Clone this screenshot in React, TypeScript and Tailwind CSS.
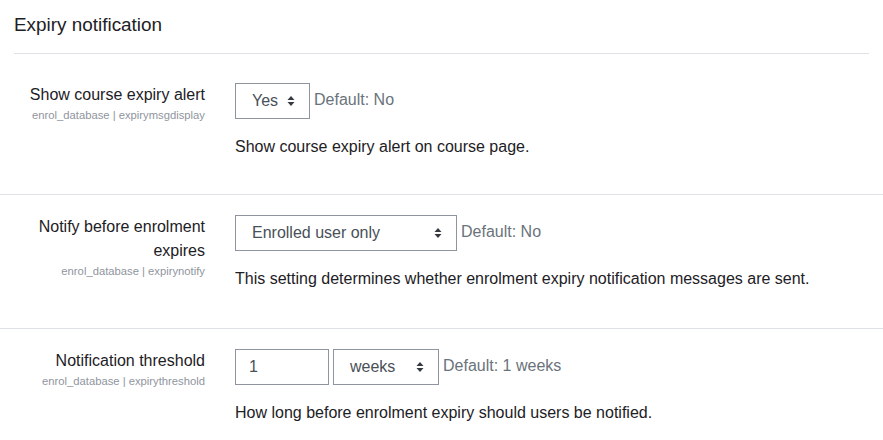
import React from "react";

function Arrows() {
  return (
    <svg width="8" height="12" viewBox="0 0 8 12" className="shrink-0">
      <path d="M4 1 L7.5 5 H0.5 Z" fill="#343a40" />
      <path d="M4 11 L7.5 7 H0.5 Z" fill="#343a40" />
    </svg>
  );
}

function Select({ value, width }: { value: string; width: string }) {
  return (
    <div
      className={`${width} h-[36px] border border-[#8f959e] flex items-center justify-between pl-4 pr-[14px] text-[16px] text-[#495057]`}
    >
      <span>{value}</span>
      <Arrows />
    </div>
  );
}

function Setting({
  label,
  name,
  control,
  def,
  desc,
  first,
}: {
  label: React.ReactNode;
  name: string;
  control: React.ReactNode;
  def: string;
  desc: string;
  first?: boolean;
}) {
  return (
    <div className={`flex ${first ? "pt-[29px] pb-[35px]" : "pt-[20px] pb-[37px] border-t border-[#dee2e6]"}`}>
      <div className="w-[205px] shrink-0 text-right">
        <div className="text-[16px] leading-[24px] text-[#1d2125]">{label}</div>
        <div className="text-[11.25px] leading-[16px] text-[#8f959e]">{name}</div>
      </div>
      <div className="ml-[30px]">
        <div className="flex items-start gap-1">
          {control}
          <span className="text-[16px] leading-[24px] pt-[5px] text-[#6a737b]">{def}</span>
        </div>
        <div className="mt-[16px] text-[16px] leading-[24px] text-[#1d2125]">{desc}</div>
      </div>
    </div>
  );
}

export default function App() {
  return (
    <div className="w-[883px] h-[440px] overflow-hidden bg-white font-['Liberation_Sans',Arial,sans-serif]">
      <div className="px-[14px] pt-[11px]">
        <h3 className="text-[18.9px] leading-[28px] text-[#1d2125] pb-[14px] border-b border-[#dee2e6]">
          Expiry notification
        </h3>
      </div>
      <Setting
        first
        label="Show course expiry alert"
        name="enrol_database | expirymsgdisplay"
        control={<Select value="Yes" width="w-[75px]" />}
        def="Default: No"
        desc="Show course expiry alert on course page."
      />
      <Setting
        label={
          <>
            Notify before enrolment
            <br />
            expires
          </>
        }
        name="enrol_database | expirynotify"
        control={<Select value="Enrolled user only" width="w-[222px]" />}
        def="Default: No"
        desc="This setting determines whether enrolment expiry notification messages are sent."
      />
      <Setting
        label="Notification threshold"
        name="enrol_database | expirythreshold"
        control={
          <div className="flex gap-1">
            <div className="w-[94px] h-[36px] border border-[#8f959e] flex items-center pl-[13px] text-[16px] text-[#495057]">
              1
            </div>
            <Select value="weeks" width="w-[106px]" />
          </div>
        }
        def="Default: 1 weeks"
        desc="How long before enrolment expiry should users be notified."
      />
    </div>
  );
}
